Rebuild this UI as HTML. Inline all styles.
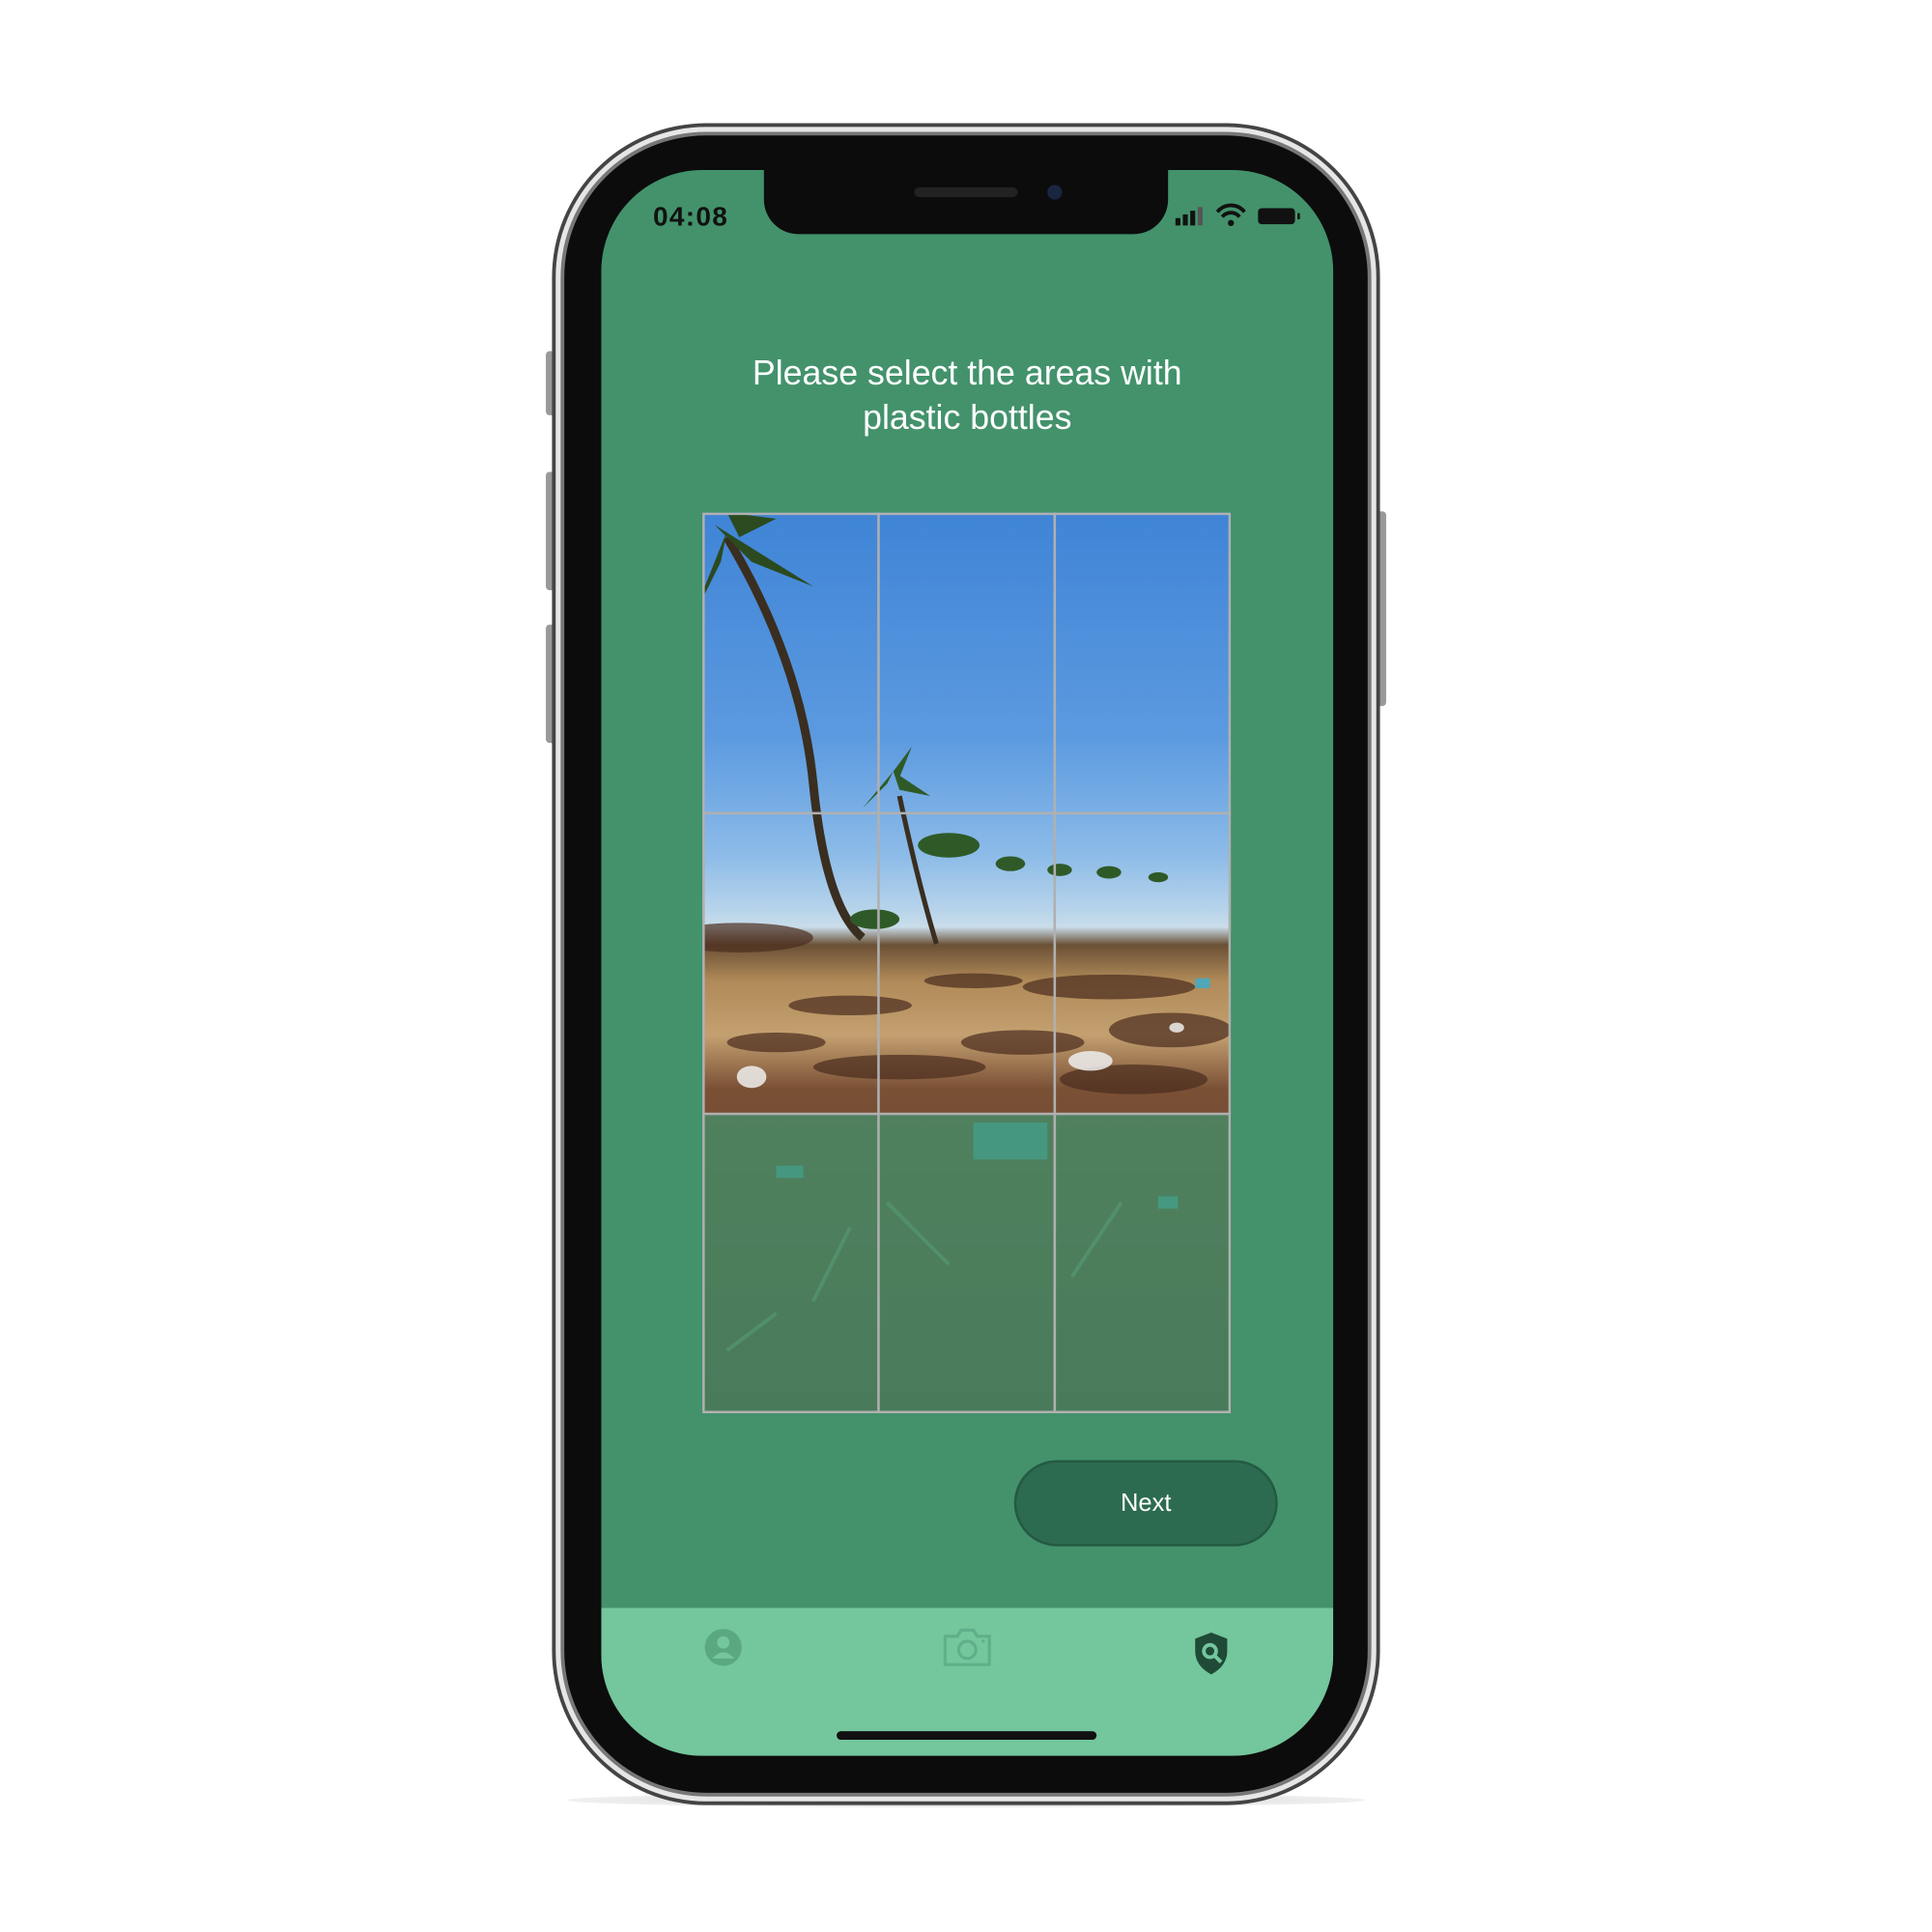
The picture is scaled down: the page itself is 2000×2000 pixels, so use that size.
<!DOCTYPE html>
<html><head><meta charset="utf-8"><style>
html,body{margin:0;padding:0;background:#fff;width:2000px;height:2000px;overflow:hidden}
#w{position:absolute;left:0;top:0;width:1568px;height:1568px;transform:scale(1.27551);transform-origin:0 0}
.abs{position:absolute}
</style></head><body><div id="w">
<div class="abs" style="left:460px;top:1455px;width:648px;height:12px;border-radius:50%;background:radial-gradient(#ccc,rgba(255,255,255,0))"></div>
<div class="abs" style="left:443px;top:285px;width:8px;height:52px;background:#999;border-radius:3px"></div>
<div class="abs" style="left:443px;top:383px;width:8px;height:96px;background:#999;border-radius:3px"></div>
<div class="abs" style="left:443px;top:507px;width:8px;height:96px;background:#999;border-radius:3px"></div>
<div class="abs" style="left:1117px;top:415px;width:8px;height:158px;background:#999;border-radius:3px"></div>
<!-- frame -->
<div class="abs" style="left:448px;top:100px;width:672px;height:1365px;border-radius:125px;background:#444"></div>
<div class="abs" style="left:451px;top:103px;width:666px;height:1359px;border-radius:122px;background:#e6e6e6"></div>
<div class="abs" style="left:455px;top:107px;width:658px;height:1351px;border-radius:118px;background:#777"></div>
<div class="abs" style="left:458px;top:110px;width:652px;height:1345px;border-radius:115px;background:#0c0c0c"></div>
<div class="abs" style="left:488px;top:138px;width:594px;height:1287px;border-radius:82px;background:#43926c;overflow:hidden">
  <div class="abs" style="left:0;top:1167px;width:594px;height:120px;background:#74c69d"></div>
</div>
<div class="abs" style="left:620px;top:130px;width:328px;height:60px;background:#0c0c0c;border-radius:0 0 28px 28px"></div>
<div class="abs" style="left:742px;top:152px;width:84px;height:8px;background:#222;border-radius:4px"></div>
<div class="abs" style="left:850px;top:150px;width:12px;height:12px;background:#1a2540;border-radius:50%"></div>
<div class="abs" style="left:530px;top:163px;font:bold 22px 'Liberation Sans',sans-serif;color:#111;letter-spacing:1px">04:08</div>
<svg class="abs" style="left:952px;top:164px" width="108" height="22" viewBox="0 0 108 22">
<rect x="2" y="13" width="4" height="6" fill="#111"/><rect x="8" y="10" width="4" height="9" fill="#111"/><rect x="14" y="7" width="4" height="12" fill="#111"/><rect x="20" y="4" width="4" height="15" fill="#555"/>
<path d="M36 8 A14 14 0 0 1 58 8 M40 12 A9 9 0 0 1 54 12" stroke="#111" stroke-width="3" fill="none"/><circle cx="47" cy="17" r="2.5" fill="#111"/>
<rect x="69" y="5" width="30" height="13" rx="3" fill="#111"/><rect x="101" y="9" width="2" height="5" fill="#111"/>
</svg>
<div class="abs" style="left:488px;top:285px;width:594px;text-align:center;font:28px/36px 'Liberation Sans',sans-serif;color:#fff">Please select the areas with<br>plastic bottles</div>
<div class="abs" style="left:570px;top:416px;width:429px;height:731px;overflow:hidden">
 <div class="abs" style="left:0;top:0;width:429px;height:731px;background:linear-gradient(180deg,#3f84d6 0%,#5c9ae0 25%,#8cbbe8 38%,#b6d3ea 44%,#c9ddea 46%,#6a5035 48%,#b08a58 52%,#c4a070 58%,#7a5035 64%,#5a3a2a 100%)"></div>
 <svg class="abs" style="left:0;top:0" width="429" height="731" viewBox="0 0 429 731">
  <g fill="#4a2c1e" opacity=".7"><ellipse cx="30" cy="345" rx="60" ry="12"/><ellipse cx="120" cy="400" rx="50" ry="8"/><ellipse cx="220" cy="380" rx="40" ry="6"/><ellipse cx="330" cy="385" rx="70" ry="10"/><ellipse cx="380" cy="420" rx="50" ry="14"/><ellipse cx="60" cy="430" rx="40" ry="8"/><ellipse cx="260" cy="430" rx="50" ry="10"/><ellipse cx="160" cy="450" rx="70" ry="10"/><ellipse cx="350" cy="460" rx="60" ry="12"/></g>
  <path d="M20 20 Q80 120 90 220 T130 345" stroke="#3a2e20" stroke-width="7" fill="none"/>
  <g fill="#2b4a20"><path d="M10 10 L90 60 L40 40Z"/><path d="M20 15 L-10 90 L15 40Z"/><path d="M25 20 L70 110 L40 50Z"/><path d="M20 0 L60 5 L30 20Z"/></g>
  <path d="M160 230 Q175 300 190 350" stroke="#3a2e20" stroke-width="4" fill="none"/>
  <g fill="#2f5a28"><path d="M155 210 L185 230 L160 225Z"/><path d="M155 210 L130 240 L150 220Z"/><path d="M155 210 L170 190 L160 215Z"/></g>
  <g fill="#2f5a28"><ellipse cx="200" cy="270" rx="25" ry="10"/><ellipse cx="250" cy="285" rx="12" ry="6"/><ellipse cx="290" cy="290" rx="10" ry="5"/><ellipse cx="330" cy="292" rx="10" ry="5"/><ellipse cx="370" cy="296" rx="8" ry="4"/><ellipse cx="140" cy="330" rx="20" ry="8"/></g>
  <g fill="#eee" opacity=".85"><ellipse cx="40" cy="458" rx="12" ry="9"/><ellipse cx="315" cy="445" rx="18" ry="8"/><ellipse cx="385" cy="418" rx="6" ry="4"/></g>
  <g fill="#4fa7b8"><rect x="400" y="378" width="12" height="8"/><rect x="60" y="530" width="22" height="10"/><rect x="220" y="495" width="60" height="30"/><rect x="370" y="555" width="16" height="10"/></g>
  <g stroke="#8fb59a" stroke-width="3" opacity=".6"><path d="M90 640 L120 580"/><path d="M150 560 L200 610"/><path d="M300 620 L340 560"/><path d="M20 680 L60 650"/></g>
 </svg>
 <div class="abs" style="left:0;top:488px;width:429px;height:243px;background:rgba(67,146,108,0.75)"></div>
 <div class="abs" style="left:0;top:0;width:429px;height:731px;box-sizing:border-box;border:2px solid #b0b0b0"></div>
 <div class="abs" style="left:142px;top:0;width:2px;height:731px;background:#b0b0b0"></div>
 <div class="abs" style="left:285px;top:0;width:2px;height:731px;background:#b0b0b0"></div>
 <div class="abs" style="left:0;top:243px;width:429px;height:2px;background:#b0b0b0"></div>
 <div class="abs" style="left:0;top:487px;width:429px;height:2px;background:#b0b0b0"></div>
</div>
<div class="abs" style="left:823px;top:1185px;width:214px;height:70px;box-sizing:border-box;border:2px solid #245a42;border-radius:35px;background:#2d6b50;color:#fff;font:20px/66px 'Liberation Sans',sans-serif;text-align:center">Next</div>
<svg class="abs" style="left:570px;top:1320px" width="34" height="34" viewBox="0 0 34 34"><circle cx="17" cy="17" r="15" fill="#5aa882"/><circle cx="17" cy="13" r="5" fill="#74c69d"/><path d="M8 26 Q17 16 26 26" fill="#74c69d"/></svg>
<svg class="abs" style="left:764px;top:1320px" width="42" height="34" viewBox="0 0 42 34"><path d="M3 8 H13 L16 3 H26 L29 8 H39 V31 H3Z" stroke="#5fb08a" stroke-width="2.5" fill="none" stroke-linejoin="round"/><circle cx="21" cy="19" r="7" stroke="#5fb08a" stroke-width="2.5" fill="none"/><circle cx="34" cy="12" r="1.3" fill="#5fb08a"/></svg>
<svg class="abs" style="left:968px;top:1324px" width="30" height="36" viewBox="0 0 30 36"><path d="M15 1 L28 6 V16 Q28 28 15 35 Q2 28 2 16 V6Z" fill="#1f4a37"/><circle cx="14" cy="16" r="5" stroke="#74c69d" stroke-width="3" fill="none"/><path d="M18 20 L23 25" stroke="#74c69d" stroke-width="3"/></svg>
<div class="abs" style="left:679px;top:1405px;width:211px;height:7px;background:#111;border-radius:4px"></div>
</div></body></html>
